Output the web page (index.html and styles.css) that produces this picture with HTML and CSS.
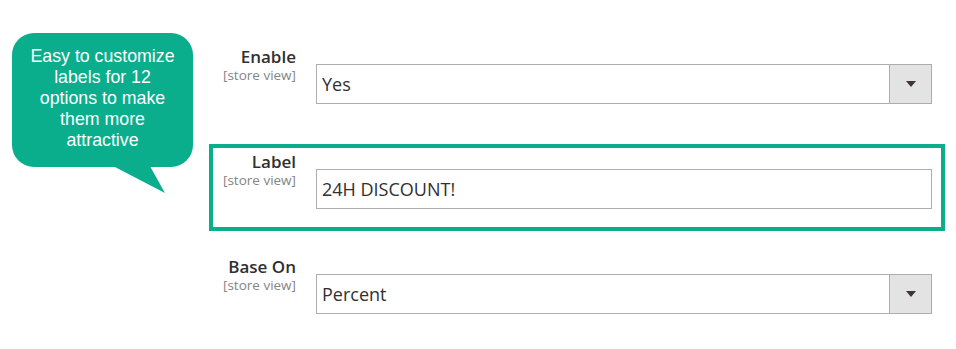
FILE: index.html
```html
<!DOCTYPE html>
<html lang="en">

<head>
  <meta charset="UTF-8">
  <meta name="viewport" content="width=device-width, initial-scale=1.0">
  <title>Option Labels</title>
  <link rel="stylesheet" href="styles.css">
</head>

<body>
  <div class="page">
    <div class="note-column">
      <div class="bubble">
        Easy to customize<br>
        labels for 12<br>
        options to make<br>
        them more<br>
        attractive
      </div>
    </div>

    <div class="fieldset">
      <div class="field">
        <div class="field-label">
          <span class="label-text">Enable</span>
          <span class="scope">[store view]</span>
        </div>
        <div class="control select">
          <span class="value">Yes</span>
          <span class="select-button"><span class="arrow"></span></span>
        </div>
      </div>

      <div class="field field-highlight">
        <div class="field-label">
          <span class="label-text">Label</span>
          <span class="scope">[store view]</span>
        </div>
        <div class="control">
          <span class="value">24H DISCOUNT!</span>
        </div>
      </div>

      <div class="field">
        <div class="field-label">
          <span class="label-text">Base On</span>
          <span class="scope">[store view]</span>
        </div>
        <div class="control select">
          <span class="value">Percent</span>
          <span class="select-button"><span class="arrow"></span></span>
        </div>
      </div>
    </div>
  </div>
</body>

</html>
```

FILE: styles.css
```css
* {
  box-sizing: border-box;
  margin: 0;
  padding: 0;
}

body {
  font-family: 'Open Sans', 'DejaVu Sans', sans-serif;
  color: #303030;
  background-color: #fff;
  width: 956px;
  height: 349px;
  overflow: hidden;
}

.page {
  display: flex;
  align-items: flex-start;
  gap: 16px;
  padding-left: 12px;
}

.note-column {
  padding-top: 33px;
}

.bubble {
  position: relative;
  width: 181px;
  padding: 13px 6px 16px;
  background-color: #0aae8c;
  border-radius: 22px;
  color: #fff;
  font-family: 'Liberation Sans', Arial, sans-serif;
  font-size: 17.75px;
  line-height: 21px;
  text-align: center;
}

.bubble::after {
  content: '';
  position: absolute;
  left: 101px;
  top: 133px;
  width: 52px;
  height: 27px;
  background-color: #0aae8c;
  clip-path: polygon(0 0, 71% 0, 100% 100%);
}

.fieldset {
  width: 736px;
  padding-top: 39px;
  display: flex;
  flex-direction: column;
  gap: 18px;
}

.field {
  display: grid;
  grid-template-columns: 83px 1fr;
  column-gap: 20px;
  padding: 4px 9px 18px 0;
  border: 4px solid transparent;
}

.field-highlight {
  border-color: #0aae8c;
}

.field-label {
  display: flex;
  flex-direction: column;
  align-items: flex-end;
  text-align: right;
  white-space: nowrap;
}

.label-text {
  font-size: 17px;
  font-weight: 600;
  line-height: 20px;
}

.scope {
  font-size: 13.5px;
  line-height: 17px;
  color: #858585;
}

.control {
  display: flex;
  margin-top: 17px;
  height: 40px;
  border: 1px solid #adadad;
  background-color: #fff;
}

.value {
  flex: 1;
  padding-left: 5px;
  font-size: 18px;
  line-height: 38px;
}

.select-button {
  display: flex;
  align-items: center;
  justify-content: center;
  width: 42px;
  border-left: 1px solid #adadad;
  background-color: #e3e3e3;
}

.arrow {
  width: 0;
  height: 0;
  border-left: 5px solid transparent;
  border-right: 5px solid transparent;
  border-top: 6px solid #41362f;
}
```
